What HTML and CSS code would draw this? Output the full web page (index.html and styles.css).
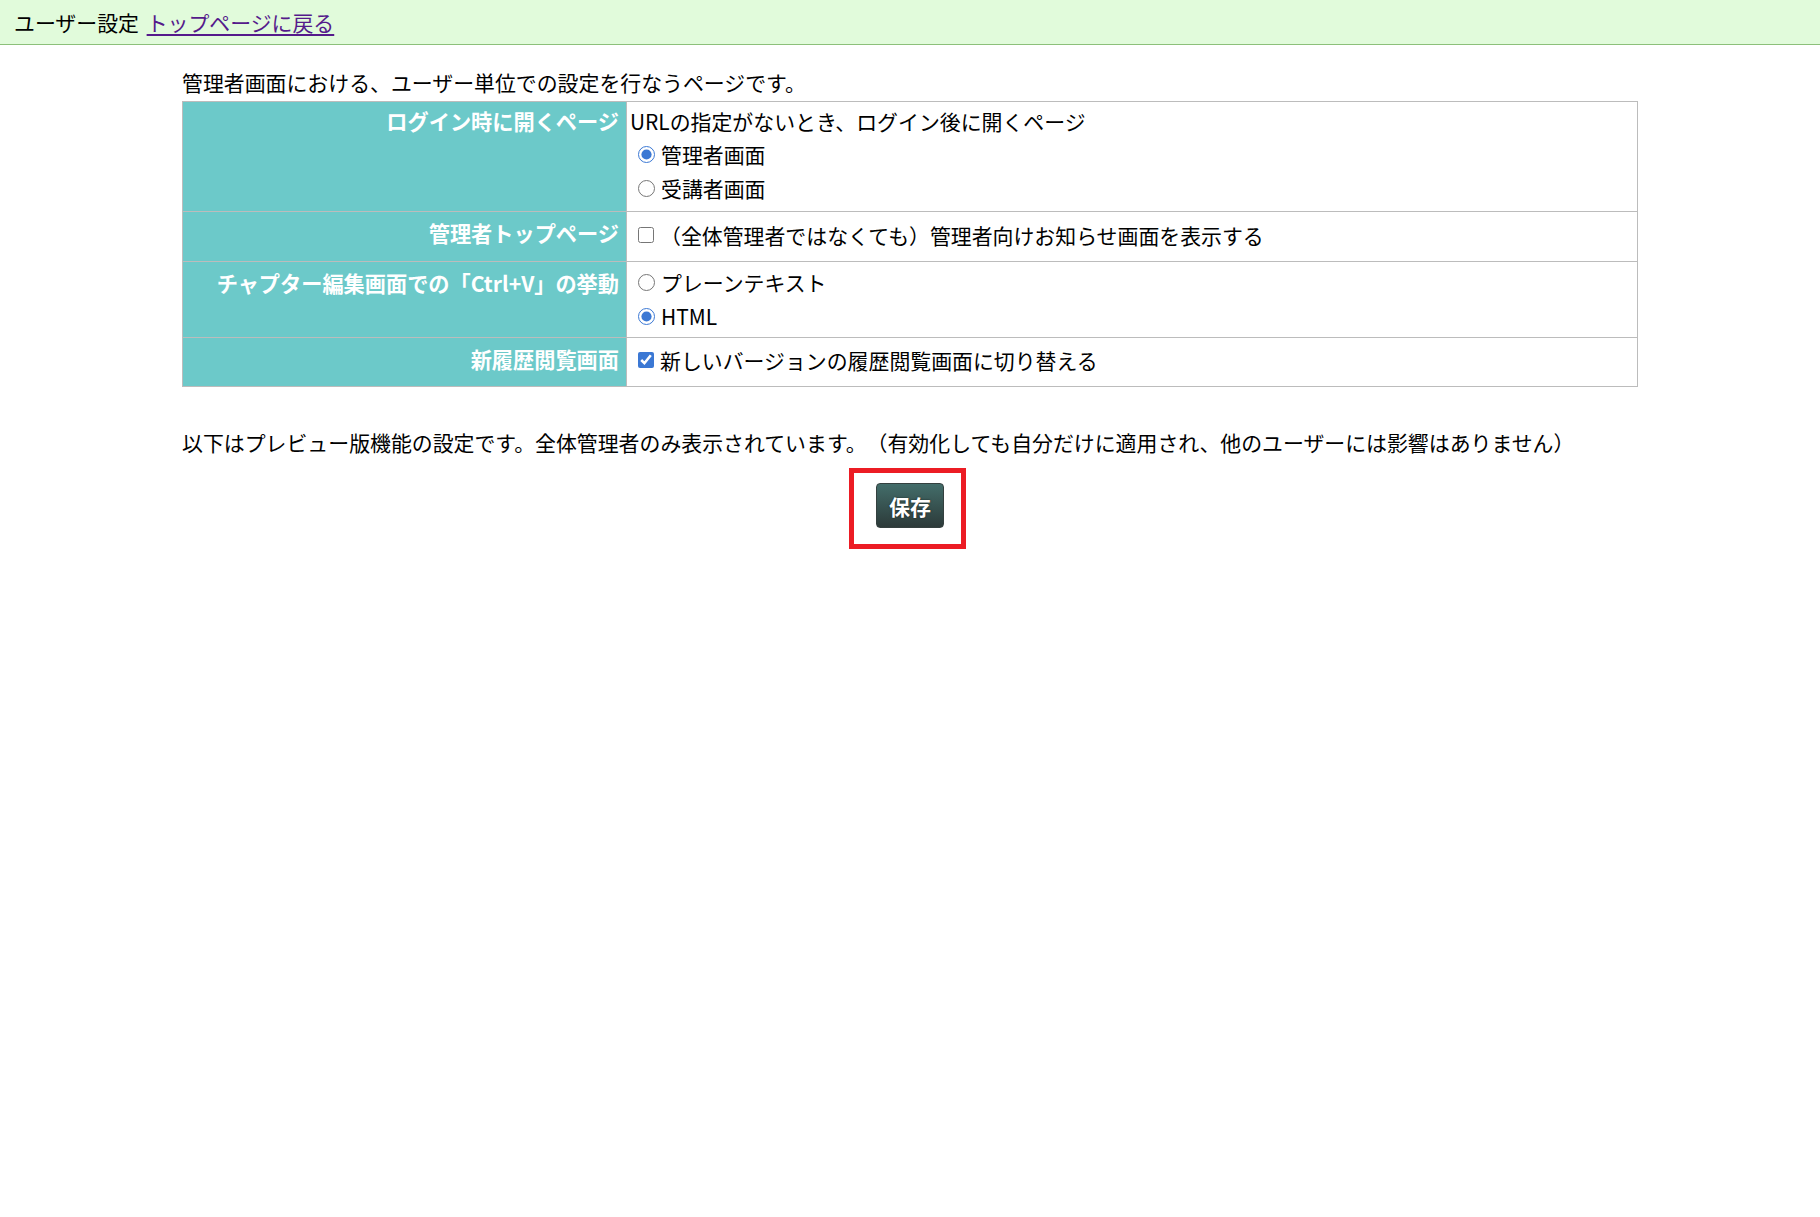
FILE: index.html
```html
<!DOCTYPE html>
<html lang="ja">
<head>
<meta charset="utf-8">
<title>ユーザー設定</title>
<link rel="stylesheet" href="styles.css">
</head>
<body>
<header class="topbar">
  <span class="topbar-title">ユーザー設定</span>
  <a class="topbar-link" href="#">トップページに戻る</a>
</header>
<main class="content">
  <p class="intro">管理者画面における、ユーザー単位での設定を行なうページです。</p>
  <table class="settings">
    <tr class="row-login">
      <th>ログイン時に開くページ</th>
      <td>
        <div class="desc">URLの指定がないとき、ログイン後に開くページ</div>
        <label class="opt"><input type="radio" name="login" checked>管理者画面</label>
        <label class="opt"><input type="radio" name="login">受講者画面</label>
      </td>
    </tr>
    <tr class="row-check">
      <th>管理者トップページ</th>
      <td>
        <label class="opt"><input type="checkbox" class="cb">（全体管理者ではなくても）管理者向けお知らせ画面を表示する</label>
      </td>
    </tr>
    <tr class="row-paste">
      <th>チャプター編集画面での「Ctrl+V」の挙動</th>
      <td>
        <label class="opt"><input type="radio" name="paste">プレーンテキスト</label>
        <label class="opt"><input type="radio" name="paste" checked>HTML</label>
      </td>
    </tr>
    <tr class="row-check last">
      <th>新履歴閲覧画面</th>
      <td>
        <label class="opt"><input type="checkbox" class="cb" checked>新しいバージョンの履歴閲覧画面に切り替える</label>
      </td>
    </tr>
  </table>
  <p class="preview-note">以下はプレビュー版機能の設定です。全体管理者のみ表示されています。（有効化しても自分だけに適用され、他のユーザーには影響はありません）</p>
  <div class="save-highlight">
    <button class="save-btn" type="button">保存</button>
  </div>
</main>
</body>
</html>
```
FILE: styles.css
```css
html, body {
  margin: 0;
  padding: 0;
  background: #ffffff;
}

body {
  font-family: "Noto Sans CJK JP", "Noto Sans", sans-serif;
  font-size: 20.9px;
  color: #000000;
  text-spacing-trim: space-all;
}

.topbar {
  height: 44px;
  line-height: 44px;
  padding-left: 14px;
  background: #e1fbdb;
  border-bottom: 1px solid #8cc07a;
  white-space: nowrap;
}

.topbar-link {
  color: #551a8b;
  text-decoration: underline;
  text-underline-offset: 3px;
  margin-left: 3px;
}

.content {
  width: 80%;
  margin: 0 auto;
  padding-top: 23px;
}

.intro {
  margin: 0 0 5px 0;
  line-height: 28px;
}

.settings {
  width: 100%;
  border-collapse: collapse;
  border: 1px solid #bcbcbc;
}

.settings th,
.settings td {
  border: 1px solid #bcbcbc;
  vertical-align: top;
}

.settings th {
  width: 436px;
  background: #6cc9c9;
  color: #ffffff;
  font-weight: bold;
  font-size: 21.2px;
  text-align: right;
  padding: 4px 7px 0 0;
  line-height: 34px;
  white-space: nowrap;
}

.settings td {
  padding: 3px 4px 4px 3px;
  line-height: 34px;
}

.desc {
  line-height: 32px;
}

.row-login td {
  padding-bottom: 6px;
}

.row-login th {
  padding-top: 2px;
}

.row-check td {
  padding-top: 6px;
  padding-bottom: 9px;
}

.row-check.last td {
  padding-top: 5px;
}

.opt {
  display: flex;
  align-items: center;
  height: 34px;
}

.opt input {
  width: 17px;
  height: 17px;
  margin: 0 6px 0 8px;
  accent-color: #3b78d4;
}

.opt input.cb {
  width: 16px;
  height: 16px;
  margin: 0 6px 0 8px;
}

.preview-note {
  margin: 41px 0 0 0;
  line-height: 28px;
  white-space: nowrap;
}

.save-highlight {
  box-sizing: border-box;
  width: 117px;
  height: 81px;
  margin: 12px auto 0;
  position: relative;
  left: -3px;
  border: 5px solid #ec1c24;
  display: flex;
  justify-content: center;
  align-items: flex-start;
  padding: 10px 0 0 6px;
}

.save-btn {
  width: 68px;
  height: 45px;
  padding: 0;
  border: 1px solid #34403f;
  border-radius: 4px;
  background: linear-gradient(#436d6a, #2c3a39);
  color: #ffffff;
  font-family: "Noto Sans CJK JP", sans-serif;
  font-size: 21px;
  font-weight: bold;
  text-shadow: 0 0 2px rgba(0, 0, 0, 0.6);
  cursor: pointer;
}
```
